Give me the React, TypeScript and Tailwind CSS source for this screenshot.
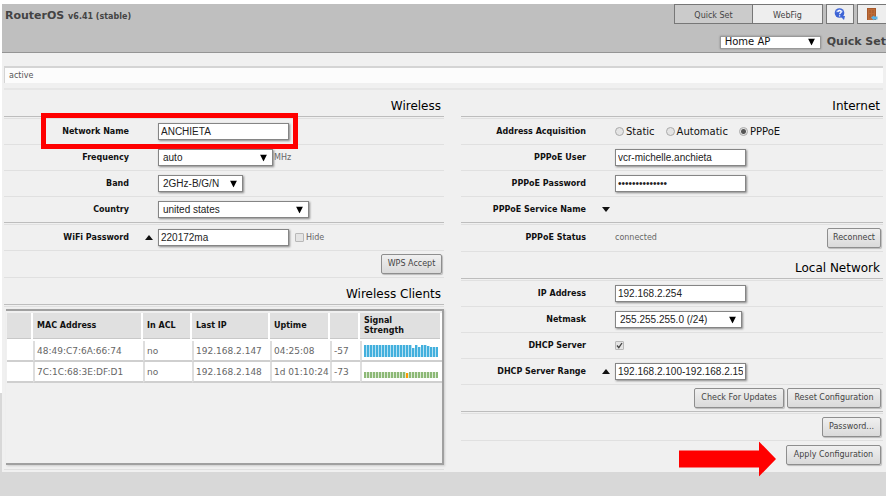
import type { ReactNode } from "react";

const field =
  "h-[17px] border border-[#858585] bg-white text-[10px] leading-none text-[#222] shadow-[1px_1px_2px_#888] outline-none font-['Liberation_Sans',Arial,sans-serif]";

function Divider() {
  return <div className="h-[3px] border-t border-b border-t-[#bdbdbd] border-b-[#e0e0e0]" />;
}

function Heading({ children }: { children: ReactNode }) {
  return (
    <>
      <h2 className="flex h-[26px] items-end justify-end pr-[3px] pb-0.5 text-[12px] leading-4 text-black">
        {children}
      </h2>
      <Divider />
    </>
  );
}

type RowProps = {
  label: string;
  id?: string;
  toggle?: "up" | "down";
  last?: boolean;
  tall?: boolean;
  action?: ReactNode;
  children?: ReactNode;
};

function Row({ label, id, toggle, last, tall, action, children }: RowProps) {
  return (
    <div
      className={`relative flex items-center ${tall ? "h-[27px]" : last ? "h-[25px]" : "h-[26px]"} ${
        last ? "" : "border-b border-[#e0e0e0]"
      }`}
    >
      <label htmlFor={id} className="w-[125px] shrink-0 text-right text-[8px] font-bold text-[#111]">
        {label}
      </label>
      <div className="flex w-[29px] shrink-0 justify-end pr-[5px]">
        {toggle && (
          <button type="button" aria-label={`Toggle ${label}`}>
            <svg width="8" height="5" viewBox="0 0 8 5" className="block fill-[#111]">
              <path d={toggle === "up" ? "M4 0 8 5H0z" : "M0 0H8L4 5z"} />
            </svg>
          </button>
        )}
      </div>
      {children}
      {action && <div className="ml-auto flex pr-0.5">{action}</div>}
    </div>
  );
}

function Actions({ children, last }: { children: ReactNode; last?: boolean }) {
  return (
    <div
      className={`flex items-center justify-end gap-[3px] pr-0.5 ${
        last ? "h-[26px]" : "h-[27px] border-b border-[#e0e0e0]"
      }`}
    >
      {children}
    </div>
  );
}

function Button({ children, width }: { children: ReactNode; width: string }) {
  return (
    <button
      type="button"
      className={`h-5 ${width} rounded-[2px] border border-[#8e8e8e] bg-linear-to-b from-[#f0f0f0] to-[#dadada] text-[8px] whitespace-nowrap text-[#444] shadow-[1px_1px_1px_#bbb]`}
    >
      {children}
    </button>
  );
}

function Select({ id, value, width, className = field, label }: { id?: string; value: string; width: string; className?: string; label?: string }) {
  return (
    <div className={`relative ${width}`}>
      <select id={id} aria-label={label} className={`${className} block w-full appearance-none pl-1`}>
        <option>{value}</option>
      </select>
      <svg width="7" height="7" viewBox="0 0 7 7" className="pointer-events-none absolute top-1/2 right-1.5 -translate-y-1/2 fill-black">
        <path d="M0 0H7L3.5 7z" />
      </svg>
    </div>
  );
}

function Radio({ label, checked }: { label: string; checked?: boolean }) {
  return (
    <label className="flex items-center gap-0.5 text-[10px] leading-3 text-[#111]">
      <input
        type="radio"
        name="acquisition"
        defaultChecked={checked}
        className="size-[9px] appearance-none rounded-full border border-[#aaa] bg-[#e4e4e4] checked:bg-[radial-gradient(circle,#555_0_2px,#e4e4e4_3px)]"
      />
      {label}
    </label>
  );
}

function Check({ id, label, checked }: { id?: string; label?: string; checked?: boolean }) {
  return (
    <label className="flex items-center gap-0.5 text-[8px] text-[#666]">
      <span className="relative block size-[9px]">
        <input
          id={id}
          type="checkbox"
          defaultChecked={checked}
          className="peer block size-[9px] appearance-none rounded-[1px] border border-[#b8b8b8] bg-[#e4e4e4]"
        />
        <svg viewBox="0 0 9 9" className="pointer-events-none absolute inset-0 hidden fill-none stroke-[#444] peer-checked:block">
          <path d="M2 4.5 3.8 6.6 7 2" strokeWidth="1.3" />
        </svg>
      </span>
      {label}
    </label>
  );
}

const strong = [12, 12, 12, 12, 12, 12, 12, 12, 12, 12, 12, 12, 12, 12, 12, 12, 9, 12, 10, 12, 12, 11, 10, 10, 10];
const weak = [6, 6, 6, 6, 6, 6, 6, 6, 6, 6, 6, 6, 6, 6, 5, 6, 6, 6, 6, 6, 6, 6, 6, 6, 6];

function Signal({ levels, color, light, alert }: { levels: number[]; color: string; light: string; alert?: number }) {
  return (
    <svg width="75" height="12" viewBox="0 0 75 12" className="block" shapeRendering="crispEdges">
      {levels.map((h, i) => (
        <g key={i}>
          <rect x={i * 3} y={12 - h} width="2" height={h} fill={i === alert ? "#ff9a00" : color} />
          {i < levels.length - 1 && <rect x={i * 3 + 2} y={12 - h} width="1" height={h} fill={light} />}
        </g>
      ))}
    </svg>
  );
}

const clients = [
  { mac: "48:49:C7:6A:66:74", acl: "no", ip: "192.168.2.147", up: "04:25:08", db: "-57", bars: <Signal levels={strong} color="#43b0dd" light="#b4e0f3" /> },
  { mac: "7C:1C:68:3E:DF:D1", acl: "no", ip: "192.168.2.148", up: "1d 01:10:24", db: "-73", bars: <Signal levels={weak} color="#8db977" light="#dcead5" alert={14} /> },
];

const columns = ["", "MAC Address", "In ACL", "Last IP", "Uptime", "", "Signal Strength"];
const th = "border-r-2 border-b-2 border-r-white border-b-white bg-[#e0e0e0] pl-1 text-left shadow-[inset_0_-1px_#c8c8c8]";
const td = "border-l-2 border-b-2 border-l-[#dedede] border-b-[#cfcfcf] bg-white pl-0.5 first:border-l-0";

function Clients() {
  return (
    <div className="mt-0.5 mb-1 ml-0.5 flex-1 border-t-2 border-r-2 border-b-2 border-[#a0a0a0] pt-0.5 pl-px shadow-[1px_1px_2px_#ccc]">
      <table className="w-full table-fixed border-separate border-spacing-0 text-[9px] leading-[10px] text-[#666]">
        <colgroup>
          <col className="w-[26px]" />
          <col className="w-[110px]" />
          <col className="w-[49px]" />
          <col className="w-[78px]" />
          <col className="w-[60px]" />
          <col className="w-[30px]" />
          <col />
        </colgroup>
        <thead className="text-[8px] text-[#111]">
          <tr className="h-[28px]">
            {columns.map((name, i) => (
              <th key={i} className={`${th} ${i === columns.length - 1 ? "pr-6" : ""}`}>
                {name}
              </th>
            ))}
          </tr>
        </thead>
        <tbody>
          {clients.map((c) => (
            <tr key={c.mac} className="h-[21px] whitespace-nowrap">
              <td className={td} />
              <td className={td}>{c.mac}</td>
              <td className={td}>{c.acl}</td>
              <td className={td}>{c.ip}</td>
              <td className={td}>{c.up}</td>
              <td className={td}>{c.db}</td>
              <td className={td}>{c.bars}</td>
            </tr>
          ))}
        </tbody>
      </table>
    </div>
  );
}

function Header() {
  return (
    <header className="flex h-[49px] justify-between border-b border-[#949494] bg-[#bfbfbf] pl-[3px] text-[#444]">
      <h1 className="pt-1 text-[11px] leading-4 font-bold">
        RouterOS <span className="text-[8px]">v6.41 (stable)</span>
      </h1>
      <div className="flex flex-col items-end justify-between">
        <nav className="flex h-5 gap-[3px] text-[8px]">
          <div className="flex">
            <button type="button" className="w-[79px] border border-[#777] bg-[#cbcbcb] pt-[3px]">Quick Set</button>
            <button type="button" className="w-[70px] border border-l-0 border-[#777] bg-[#eee] pt-[3px]">WebFig</button>
          </div>
          <button type="button" aria-label="Help" className="flex w-7 items-center justify-center border border-[#777] bg-[#eee]">
            <svg width="12" height="12" viewBox="0 0 12 12">
              <path d="M7 8h4l-1 4-3-3z" fill="#4169d8" />
              <circle cx="5.5" cy="5" r="4.8" fill="#3d63d5" />
              <path d="M1.6 4.2a4 3.4 0 0 1 7.8 0z" fill="#7d9bea" />
              <path d="M3.9 3.9c0-2 3.3-2 3.3 0C7.2 5 5.6 4.9 5.6 6.3M5.6 7.3v1.2" fill="none" stroke="#fff" strokeWidth="1.3" />
            </svg>
          </button>
          <button type="button" aria-label="Log out" className="flex w-[29px] items-center justify-center border border-r-0 border-[#777] bg-[#eee]">
            <svg width="12" height="13" viewBox="0 0 12 13">
              <path d="M1 0h9v12H1z" fill="#a8592a" />
              <path d="M2 1h7v11H2z" fill="#bd6c38" />
              <path d="M3 2h2v3H3zM6 2h2v3H6zM3 6h2v4H3zM6 6h2v4H6z" fill="#b06030" />
              <path d="M5 9.5 8 7.5v1h3.5v3H8v1z" fill="#58b3e8" />
            </svg>
          </button>
        </nav>
        <div className="flex items-center gap-1.5 pb-0.5">
          <Select
            label="Mode"
            value="Home AP"
            width="w-[101px]"
            className="h-[13px] border border-[#999] bg-white text-[10px] leading-none text-[#111] shadow-[0_0_2px_#888]"
          />
          <span className="text-[11px] leading-4 font-bold">Quick Set</span>
        </div>
      </div>
    </header>
  );
}

export default function App() {
  return (
    <div className="relative min-h-screen bg-[#d8d8d8] pl-0.5 font-['DejaVu_Sans',Verdana,sans-serif] text-[8px]">
      <div className="absolute top-0 left-0 h-[393px] w-0.5 bg-white" />
      <div className="h-1 bg-white" />
      <Header />
      <main className="bg-[#f0f0f0] pt-[13px] pr-[3px] pl-0.5">
        <div className="h-[17px] border-t-2 border-l border-t-[#d4d4d4] border-l-[#d4d4d4] bg-[#fcfcfc] pl-1 text-[8px] leading-[15px] text-[#555]">
          active
        </div>
        <div className="mt-[5px] h-0.5 bg-[#e6e6e6]" />
        <div className="grid grid-cols-[440fr_422fr] gap-[17px]">
          <section className="flex flex-col">
            <Heading>Wireless</Heading>
            <Row label="Network Name" id="ssid">
              <input id="ssid" defaultValue="ANCHIETA" className={`${field} w-[131px] px-0.5`} />
              <div className="pointer-events-none absolute -top-1.5 left-[37px] h-9 w-[257px] border-[5px] border-[#ff0000]" />
            </Row>
            <Row label="Frequency" id="freq">
              <Select id="freq" value="auto" width="w-[115px]" />
              <span className="pl-px text-[#666]">MHz</span>
            </Row>
            <Row label="Band" id="band">
              <Select id="band" value="2GHz-B/G/N" width="w-[85px]" />
            </Row>
            <Row label="Country" id="country" last>
              <Select id="country" value="united states" width="w-[151px]" />
            </Row>
            <Divider />
            <Row label="WiFi Password" id="wifi" toggle="up">
              <input id="wifi" defaultValue="220172ma" className={`${field} mr-1.5 w-[131px] px-0.5`} />
              <Check label="Hide" />
            </Row>
            <Actions>
              <Button width="w-[61px]">WPS Accept</Button>
            </Actions>
            <Heading>Wireless Clients</Heading>
            <Clients />
            <div className="mb-0.5 h-px bg-[#e0e0e0]" />
          </section>
          <section>
            <Heading>Internet</Heading>
            <Row label="Address Acquisition">
              <div className="flex gap-[11px]">
                <Radio label="Static" />
                <Radio label="Automatic" />
                <Radio label="PPPoE" checked />
              </div>
            </Row>
            <Row label="PPPoE User" id="user">
              <input id="user" defaultValue="vcr-michelle.anchieta" className={`${field} w-[131px] px-0.5`} />
            </Row>
            <Row label="PPPoE Password" id="pass">
              <input id="pass" type="password" defaultValue="aaaaaaaaaaaaaa" className={`${field} w-[131px] px-0.5`} />
            </Row>
            <Row label="PPPoE Service Name" toggle="down" last />
            <Divider />
            <Row label="PPPoE Status" tall action={<Button width="w-[54px]">Reconnect</Button>}>
              <output className="text-[#666]">connected</output>
            </Row>
            <Heading>Local Network</Heading>
            <Row label="IP Address" id="ip">
              <input id="ip" defaultValue="192.168.2.254" className={`${field} w-[131px] px-0.5`} />
            </Row>
            <Row label="Netmask" id="mask">
              <Select id="mask" value="255.255.255.0 (/24)" width="w-[127px]" />
            </Row>
            <Row label="DHCP Server" id="dhcp">
              <Check id="dhcp" checked />
            </Row>
            <Row label="DHCP Server Range" id="range" toggle="up">
              <input id="range" defaultValue="192.168.2.100-192.168.2.150" className={`${field} w-[131px] px-0.5`} />
            </Row>
            <Actions last>
              <Button width="w-[90px]">Check For Updates</Button>
              <Button width="w-[94px]">Reset Configuration</Button>
            </Actions>
            <Divider />
            <Actions>
              <Button width="w-[59px]">Password...</Button>
            </Actions>
            <div className="flex h-[31px] justify-end pt-1 pr-0.5">
              <div className="relative">
                <Button width="w-[95px]">Apply Configuration</Button>
                <svg width="97" height="35" viewBox="0 0 97 35" className="pointer-events-none absolute top-1/2 right-full mr-2.5 -translate-y-1/2 fill-[#ff0000]">
                  <path d="M0 9H80V0L97 17.5 80 35V26H0z" />
                </svg>
              </div>
            </div>
          </section>
        </div>
      </main>
    </div>
  );
}
